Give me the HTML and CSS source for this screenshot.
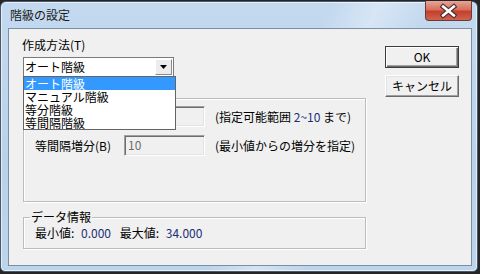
FILE: index.html
```html
<!DOCTYPE html>
<html lang="ja">
<head>
    <meta charset="UTF-8">
    <title>階級の設定</title>
    <link rel="stylesheet" href="styles.css">
</head>
<body>
    <div class="window">
        <div class="titlebar">
            <span class="title">階級の設定</span>
            <span class="close-btn">
                <svg width="47" height="20" viewBox="0 0 47 20">
                    <path d="M18.5 5.5 L29.5 14.5 M29.5 5.5 L18.5 14.5" stroke="#4a3030" stroke-width="5" stroke-linecap="square" fill="none"/>
                    <path d="M18.5 5.5 L29.5 14.5 M29.5 5.5 L18.5 14.5" stroke="#fff" stroke-width="2.6" stroke-linecap="square" fill="none"/>
                </svg>
            </span>
        </div>

        <div class="client">
            <div class="main">
                <div class="field-label">作成方法(T)</div>

                <div class="combo">
                    <span class="combo-text">オート階級</span>
                    <span class="combo-btn">
                        <svg width="7" height="4" viewBox="0 0 7 4"><path d="M0 0 H7 L3.5 4 Z" fill="#000"/></svg>
                    </span>
                    <ul class="combo-list">
                        <li class="selected">オート階級</li>
                        <li>マニュアル階級</li>
                        <li>等分階級</li>
                        <li>等間隔階級</li>
                    </ul>
                </div>

                <div class="group group-class">
                    <!-- first row label and group caption sit under the open list -->
                    <div class="row">
                        <span class="row-label"></span>
                        <span class="textbox"></span>
                        <span class="hint">(指定可能範囲 <span class="num">2~10</span> まで)</span>
                    </div>
                    <div class="row row-second">
                        <span class="row-label">等間隔増分(B)</span>
                        <span class="textbox">10</span>
                        <span class="hint">(最小値からの増分を指定)</span>
                    </div>
                </div>

                <div class="group group-data">
                    <span class="group-title">データ情報</span>
                    <div class="data-line">
                        <span>最小値:</span>
                        <span class="num value">0.000</span>
                        <span class="gap">最大値:</span>
                        <span class="num value">34.000</span>
                    </div>
                </div>
            </div>

            <div class="side">
                <button class="btn btn-default">OK</button>
                <button class="btn">キャンセル</button>
            </div>
        </div>
    </div>
</body>
</html>
```

FILE: styles.css
```css
body {
    margin: 0;
    background: #22262a;
    font-family: "Noto Sans CJK JP", sans-serif;
    font-size: 12px;
    color: #000;
}

/* window frame */
.window {
    margin-top: 1px;
    width: 478px;
    height: 271px;
    box-sizing: border-box;
    border: 1px solid #4a5868;
    border-radius: 6px 6px 5px 5px;
    padding: 0 5px 5px 7px;
    display: flex;
    flex-direction: column;
    background:
        linear-gradient(115deg, rgba(255,255,255,0) 55%, rgba(255,255,255,0.35) 63%, rgba(255,255,255,0) 72%),
        linear-gradient(to bottom, #c3d9ef, #b9d2ec 60%, #bcd4ec);
    box-shadow: inset 0 0 0 1px rgba(255,255,255,0.6);
}

.titlebar {
    height: 26px;
    display: flex;
    align-items: center;
}
.title {
    padding-left: 2px;
    line-height: 14px;
    color: #1a1a1a;
}
.close-btn {
    margin-left: auto;
    align-self: flex-start;
    margin-top: -1px;
    width: 47px;
    height: 20px;
    box-sizing: border-box;
    border: 1px solid #6b3a34;
    border-top: none;
    border-radius: 0 0 4px 4px;
    background: linear-gradient(to bottom, #e7a596, #d8705e 45%, #c4402c 55%, #d0634f);
    display: flex;
}
.close-btn svg {
    margin-left: -1px;
}

/* client area */
.client {
    flex: 1;
    display: flex;
    background: #f0f0f0;
    border: 1px solid #7b8ea2;
    box-sizing: border-box;
}
.main {
    padding: 9px 0 0 14px;
    width: 343px;
}
.field-label {
    margin-left: -1px;
    line-height: 14px;
}

/* combo box */
.combo {
    position: relative;
    margin-top: 5px;
    width: 151px;
    height: 20px;
    box-sizing: border-box;
    border: 1px solid #7a7a7a;
    background: #fff;
    display: flex;
    align-items: center;
}
.combo-text {
    padding-left: 1px;
    line-height: 14px;
}
.combo-btn {
    margin-left: auto;
    margin-right: 1px;
    width: 17px;
    height: 16px;
    box-sizing: border-box;
    border: 1px solid;
    border-color: #fff #8a8a8a #8a8a8a #fff;
    background: #ececec;
    display: flex;
    align-items: center;
    justify-content: center;
}
.combo-list {
    position: absolute;
    top: 100%;
    left: -1px;
    width: 153px;
    margin: 0;
    padding: 0;
    list-style: none;
    background: #fff;
    border: 1px solid #646464;
    box-sizing: border-box;
    z-index: 2;
}
.combo-list li {
    height: 13px;
    line-height: 13px;
    padding-left: 1px;
    white-space: nowrap;
}
.combo-list li.selected {
    background: #3399ff;
    color: #fff;
}

/* group boxes */
.group {
    position: relative;
    box-sizing: border-box;
    border: 1px solid #bcbcbc;
    box-shadow: inset 1px 1px 0 #fff, 1px 1px 0 #fff;
}
.group-title {
    position: absolute;
    top: -8px;
    left: 6px;
    padding: 0 1px;
    line-height: 14px;
    background: #f0f0f0;
}
.group-class {
    margin-top: 21px;
    height: 104px;
    padding-top: 7px;
}
.group-data {
    margin-top: 15px;
    height: 32px;
    padding: 8px 0 0 11px;
}

.row {
    display: flex;
    align-items: center;
    height: 21px;
}
.row-second {
    margin-top: 8px;
}
.row-label {
    width: 89px;
    padding-left: 11px;
    line-height: 14px;
}
.textbox {
    width: 81px;
    height: 21px;
    box-sizing: border-box;
    border: 1px solid;
    border-color: #a0a0a0 #fff #fff #a0a0a0;
    box-shadow: inset 1px 1px 0 #6d6d6d, inset -1px -1px 0 #e3e3e3;
    background: #f0f0f0;
    color: #6d6d6d;
    padding-left: 3px;
    line-height: 18px;
}
.hint {
    margin-left: 10px;
    line-height: 14px;
    white-space: nowrap;
}

.data-line {
    line-height: 14px;
    white-space: nowrap;
}
.num {
    color: #1c2f78;
}
.value {
    margin-left: 4px;
}
.gap {
    margin-left: 6px;
}

/* buttons */
.side {
    margin-left: 19px;
    padding-top: 17px;
    display: flex;
    flex-direction: column;
    gap: 7px;
}
.btn {
    width: 74px;
    height: 22px;
    box-sizing: border-box;
    font-family: inherit;
    font-size: 12px;
    line-height: 14px;
    padding: 0;
    color: #000;
    background: #f0f0f0;
    border: 1px solid;
    border-color: #fff #696969 #696969 #fff;
    box-shadow: inset -1px -1px 0 #a0a0a0, inset 1px 1px 0 #e3e3e3;
}
.btn-default {
    border-color: #3c3c3c;
    box-shadow: inset 1px 1px 0 #fff, inset -1px -1px 0 #696969, inset -2px -2px 0 #a0a0a0;
}
```
